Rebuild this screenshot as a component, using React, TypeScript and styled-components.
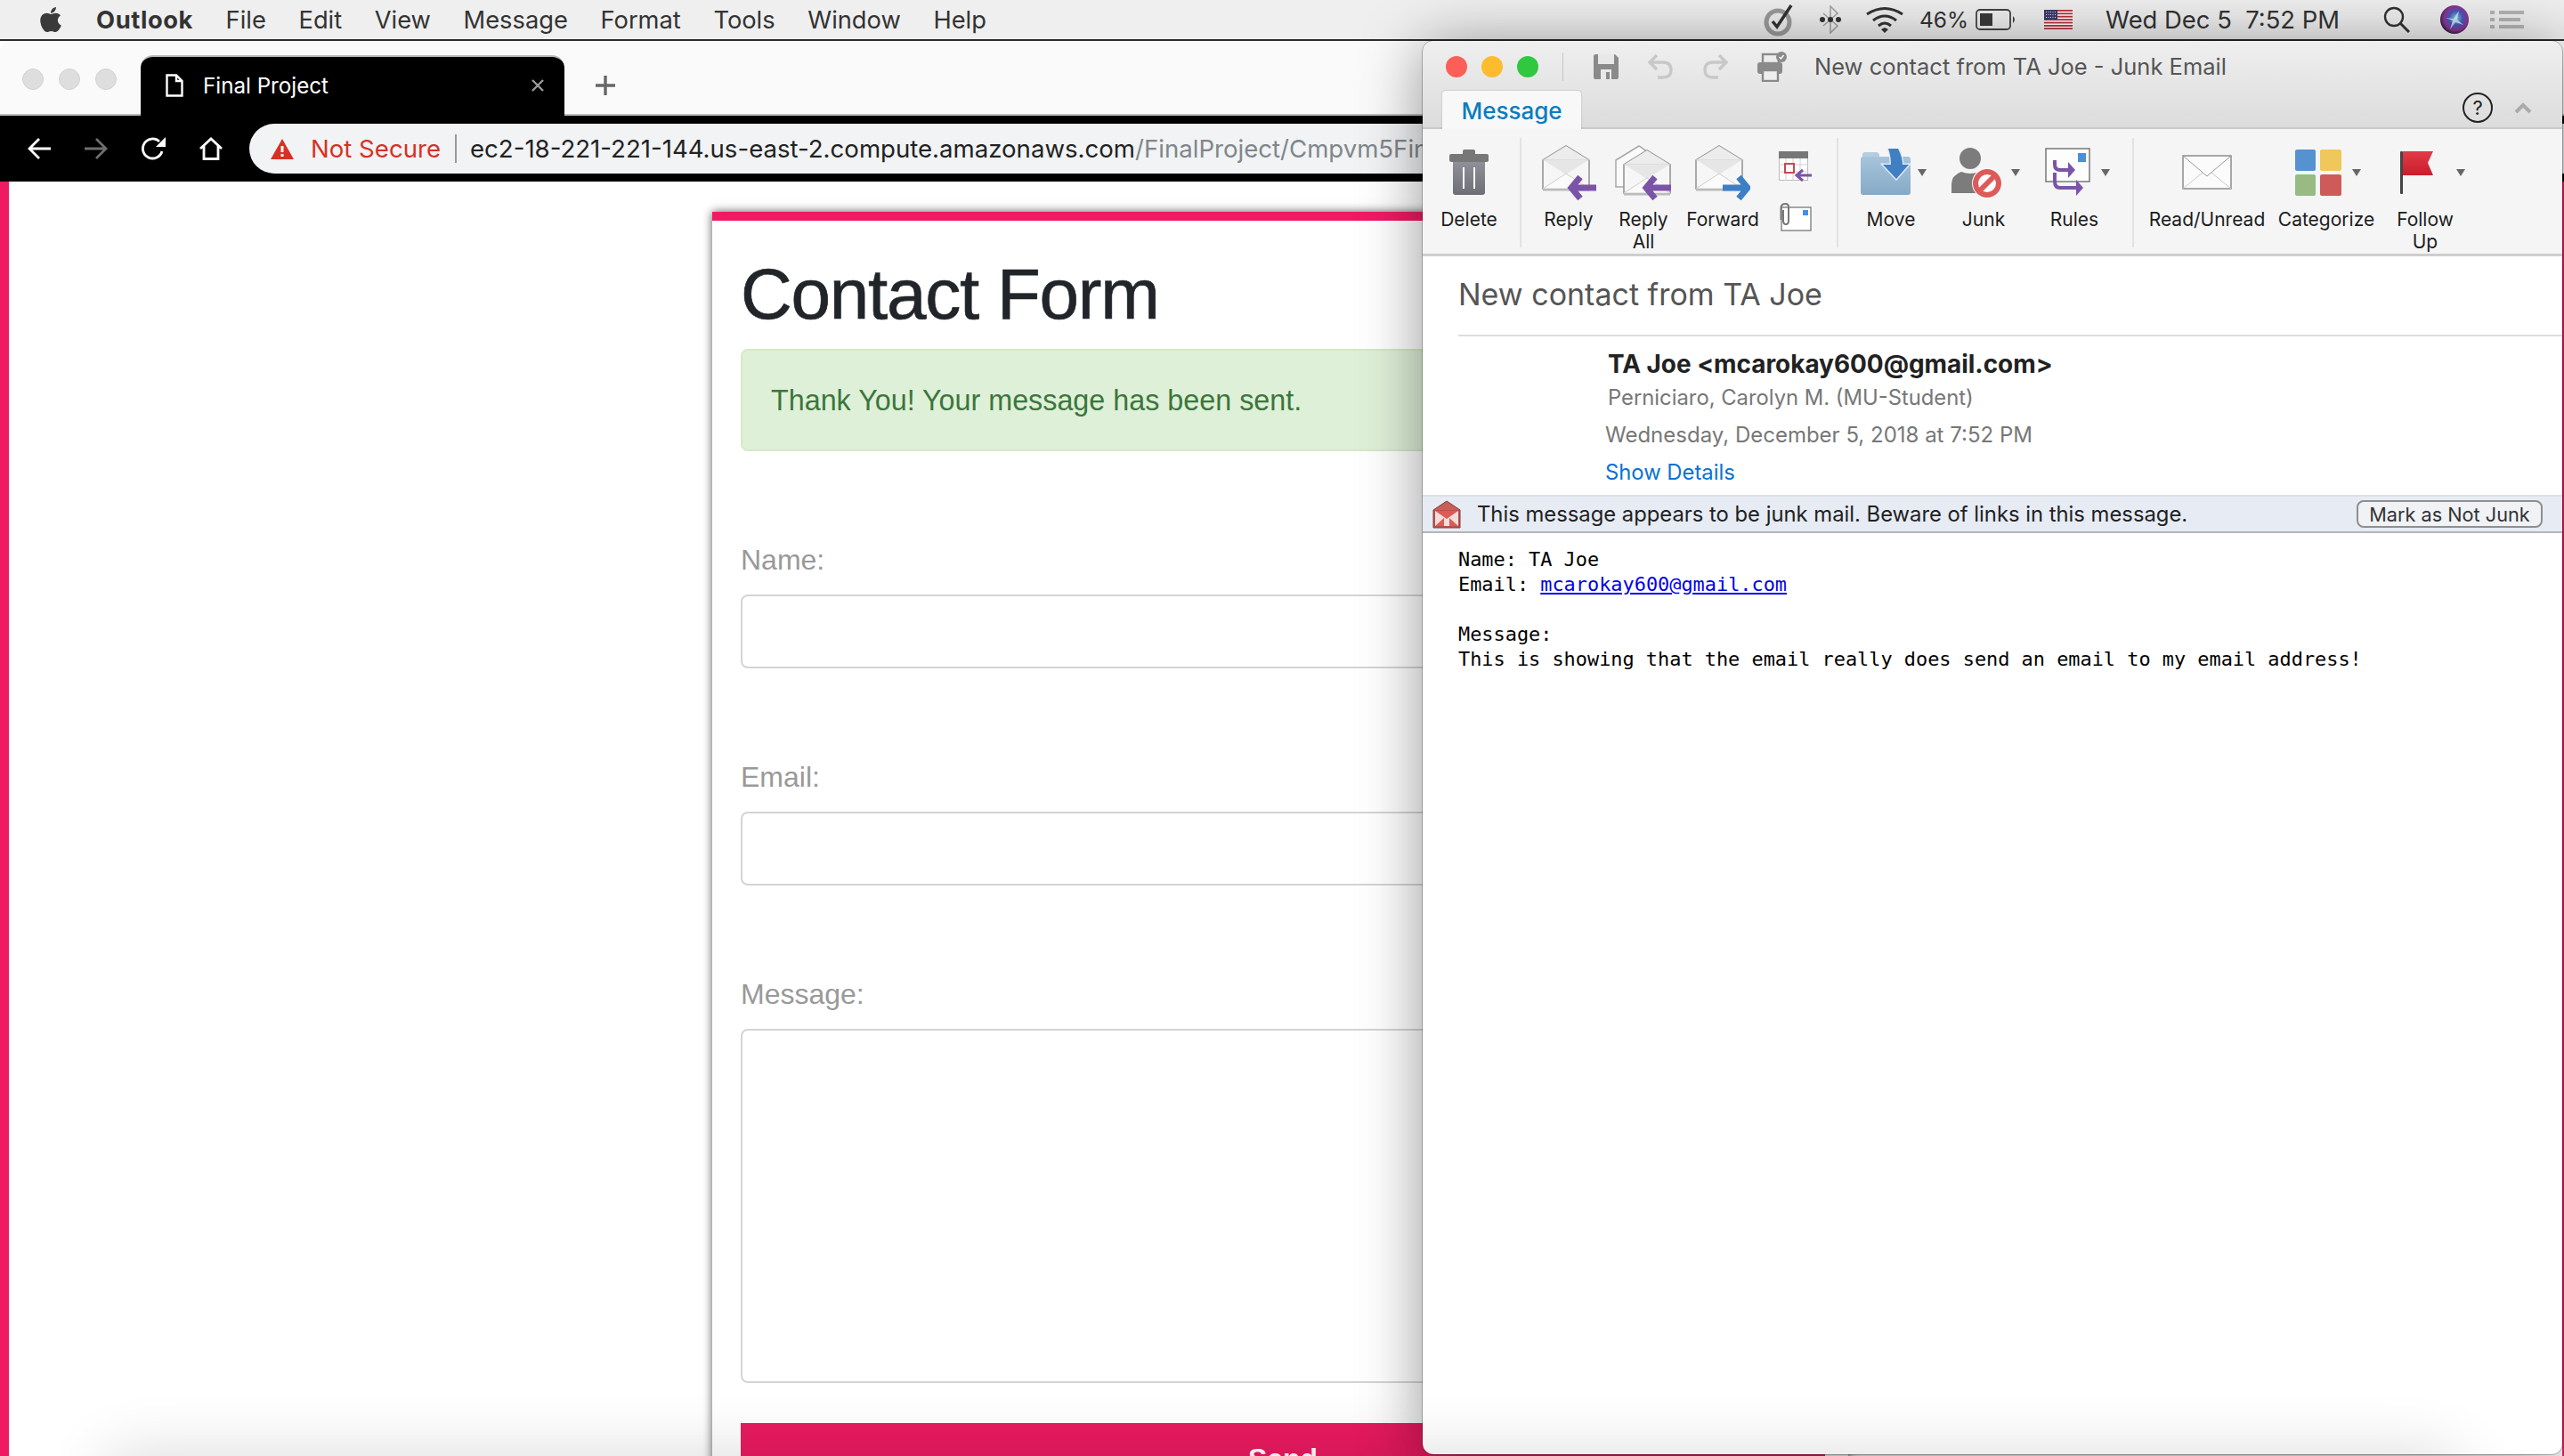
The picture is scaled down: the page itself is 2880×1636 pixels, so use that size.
import React from 'react';
import styled, { createGlobalStyle } from 'styled-components';
import { FaApple } from 'react-icons/fa';

const GlobalStyle = createGlobalStyle`
    html, body {
        margin: 0;
        padding: 0;
        background: #fff;
    }
`;

const PINK = '#f01a63';
const UI_FONT = 'Inter, "Noto Sans", sans-serif';
const PAGE_FONT = '"Liberation Sans", Arial, sans-serif';

const Screen = styled.div`
    position: relative;
    width: 2880px;
    height: 1636px;
    overflow: hidden;
    display: flex;
    flex-direction: column;
    background: #fff;
    font-family: ${UI_FONT};
`;

/* ---------- mac menu bar ---------- */

const MenuBar = styled.div`
    height: 44px;
    flex: none;
    display: flex;
    align-items: center;
    padding-left: 42px;
    background: #efefef;
    border-bottom: 2px solid #2c2c2c;
    color: #333;
    font-size: 27.3px;
`;

const AppleLogo = styled(FaApple)`
    width: 30px;
    height: 32px;
    margin-right: 36px;
    color: #3a3a3a;
`;

const MenuItems = styled.div`
    display: flex;
    gap: 36.6px;
`;

const MenuItem = styled.span<{ $bold?: boolean }>`
    font-weight: ${(p) => (p.$bold ? 700 : 400)};
    letter-spacing: ${(p) => (p.$bold ? '0.6px' : '0')};
`;

const StatusArea = styled.div`
    margin-left: auto;
    padding-right: 45px;
    display: flex;
    align-items: center;
`;

const StatusSlot = styled.span<{ $gap: number }>`
    display: flex;
    align-items: center;
    margin-left: ${(p) => p.$gap}px;
`;

const BatteryPercent = styled(StatusSlot)`
    font-size: 24.5px;
`;

const ClockSlot = styled(StatusSlot)`
    font-size: 27.4px;
`;

/* ---------- browser ---------- */

const BrowserWindow = styled.div`
    flex: 1;
    min-height: 0;
    display: flex;
    flex-direction: column;
`;

const TabStrip = styled.div`
    height: 84px;
    flex: none;
    box-sizing: border-box;
    display: flex;
    align-items: flex-end;
    padding-left: 25px;
    background: #fafafa;
    border-top-left-radius: 10px;
    border-bottom: 2px solid #bdbdbd;
`;

const GrayLights = styled.div`
    display: flex;
    gap: 17px;
    align-self: center;
    margin-top: 4px;
    margin-right: 27px;
`;

const GrayLight = styled.span`
    width: 24px;
    height: 24px;
    border-radius: 50%;
    background: #dedede;
    border: 1px solid #d2d2d2;
    box-sizing: border-box;
`;

const ActiveTab = styled.div`
    width: 476px;
    height: 68px;
    box-sizing: border-box;
    margin-bottom: -2px;
    display: flex;
    align-items: center;
    padding: 0 22px 2px 28px;
    background: #000;
    border-top: 2px solid #b8b8b8;
    border-radius: 14px 14px 0 0;
    color: #fff;
    font-size: 24.2px;
`;

const TabTitle = styled.span`
    margin-left: 22px;
    flex: 1;
`;

const NewTabButton = styled.span`
    align-self: center;
    margin-left: 34px;
    margin-top: 18px;
    display: flex;
`;

const Toolbar = styled.div`
    height: 74px;
    flex: none;
    display: flex;
    align-items: center;
    padding-left: 31px;
    background: #000;
`;

const NavIcons = styled.div`
    display: flex;
    gap: 38px;
    margin-right: 30px;
`;

const AddressPill = styled.div`
    flex: 1;
    height: 56px;
    display: flex;
    align-items: center;
    padding-left: 24px;
    background: #f1f3f4;
    border-radius: 28px 0 0 28px;
    font-size: 27.6px;
    white-space: nowrap;
    overflow: hidden;
`;

const NotSecure = styled.span`
    margin-left: 19px;
    color: #d93025;
`;

const PillDivider = styled.span`
    width: 2px;
    height: 32px;
    margin: 0 15px 0 16px;
    background: #9a9a9a;
`;

const UrlHost = styled.span`
    color: #222;
`;

const UrlPath = styled.span`
    color: #80868b;
`;

const Page = styled.div`
    flex: 1;
    min-height: 0;
    overflow: hidden;
    padding-top: 34px;
    background: #fff;
    border-left: 10px solid ${PINK};
    border-right: 2px solid ${PINK};
    font-family: ${PAGE_FONT};
`;

const FormCard = styled.div`
    width: 1276px;
    margin-left: 790px;
    box-sizing: border-box;
    padding: 0 26px 60px 32px;
    background: #fff;
    border-top: 10px solid #f01a63;
    box-shadow: 0 0 10px rgba(0, 0, 0, 0.65);
`;

const FormTitle = styled.h1`
    margin: 35px 0 13px;
    font-size: 80px;
    font-weight: 400;
    line-height: 96px;
    letter-spacing: -1.25px;
    color: #212529;
    -webkit-text-stroke: 0.7px #212529;
`;

const SuccessAlert = styled.div`
    height: 115px;
    box-sizing: border-box;
    display: flex;
    align-items: center;
    padding: 2px 31px 0 32px;
    margin-bottom: 98px;
    background: #dff0d8;
    border: 2px solid #d6e9c6;
    border-radius: 8px;
    color: #3c763d;
    font-size: 32.3px;
`;

const FieldLabel = styled.label`
    display: block;
    margin-bottom: 15px;
    font-size: 32px;
    line-height: 48px;
    color: #999;
`;

const Field = styled.div<{ $height: number }>`
    height: ${(p) => p.$height}px;
    box-sizing: border-box;
    margin-bottom: 98px;
    background: #fff;
    border: 2px solid #d4d4d4;
    border-radius: 8px;
`;

const TextareaField = styled(Field)`
    margin-bottom: 45px;
`;

const SendButton = styled.div`
    height: 96px;
    box-sizing: border-box;
    padding-top: 16px;
    background: #e91a60;
    color: #fff;
    font-size: 32px;
    line-height: 48px;
    font-weight: 700;
    text-align: center;
`;

/* ---------- outlook ---------- */

const OutlookWindow = styled.div`
    position: absolute;
    left: 1598px;
    top: 46px;
    width: 1280px;
    height: 1588px;
    box-sizing: border-box;
    display: flex;
    flex-direction: column;
    overflow: hidden;
    background: #fff;
    border-radius: 12px;
    outline: 1px solid rgba(0, 0, 0, 0.25);
    font-family: ${UI_FONT};
`;

const WindowShadow = styled.div`
    position: absolute;
    left: 1598px;
    top: 46px;
    width: 1280px;
    height: 1588px;
    border-radius: 12px;
    box-shadow: 0 6px 70px rgba(0, 0, 0, 0.42);
`;

const TitleChrome = styled.div`
    flex: none;
    height: 99px;
    box-sizing: border-box;
    display: flex;
    flex-direction: column;
    background: linear-gradient(#efefef, #dcdcdc);
    border-bottom: 2px solid #c8c8c8;
`;

const TitleRow = styled.div`
    height: 56px;
    flex: none;
    box-sizing: border-box;
    display: flex;
    align-items: center;
    padding: 1px 0 0 26px;
    color: #555;
    font-size: 25.5px;
`;

const TrafficLights = styled.div`
    display: flex;
    gap: 16px;
`;

const TrafficLight = styled.span<{ $color: string }>`
    width: 24px;
    height: 24px;
    border-radius: 50%;
    background: ${(p) => p.$color};
`;

const TitleDivider = styled.span`
    width: 1px;
    height: 32px;
    margin: 0 34px 0 27px;
    background: #c6c6c6;
`;

const QuickIcons = styled.div`
    display: flex;
    align-items: center;
    gap: 32px;
    margin-right: 30px;
`;

const TabRow = styled.div`
    flex: 1;
    display: flex;
    align-items: flex-start;
    padding-left: 22px;
`;

const MessageTab = styled.div`
    width: 156px;
    height: 44px;
    box-sizing: border-box;
    display: flex;
    align-items: center;
    justify-content: center;
    background: #f8f8f8;
    border-radius: 4px 4px 0 0;
    box-shadow: 0 0 2px rgba(0, 0, 0, 0.25);
    color: #0a7cc1;
    font-size: 26px;
    font-weight: 500;
`;

const TabRowTools = styled.div`
    margin-left: auto;
    margin-right: 34px;
    margin-top: 2px;
    display: flex;
    align-items: center;
    gap: 24px;
`;

const Ribbon = styled.div`
    flex: none;
    height: 143px;
    box-sizing: border-box;
    display: flex;
    padding-left: 14px;
    background: #f5f5f5;
    border-bottom: 3px solid #cecece;
`;

const RibbonSep = styled.span<{ $ml: number; $mr: number }>`
    width: 2px;
    height: 123px;
    margin: 10px ${(p) => p.$mr}px 0 ${(p) => p.$ml}px;
    background: #e2e2e2;
`;

const RibbonItem = styled.div<{ $w: number }>`
    width: ${(p) => p.$w}px;
    flex: none;
    display: flex;
    flex-direction: column;
    align-items: center;
    padding-top: 15px;
`;

const IconSlot = styled.div<{ $shift?: number }>`
    height: 68px;
    display: flex;
    align-items: center;
    gap: 8px;
    margin-left: ${(p) => p.$shift ?? 0}px;
`;

const RibbonLabel = styled.div`
    margin-top: 6px;
    text-align: center;
    font-size: 21px;
    line-height: 25px;
    color: #1c1c1c;
`;

const SmallStack = styled.div`
    width: 70px;
    flex: none;
    display: flex;
    flex-direction: column;
    align-items: center;
    gap: 22px;
    padding-top: 25px;
`;

const Caret = styled.span<{ $offset?: number }>`
    width: 0;
    height: 0;
    margin-left: ${(p) => p.$offset ?? 0}px;
    border-left: 5px solid transparent;
    border-right: 5px solid transparent;
    border-top: 8px solid #666;
`;

const Subject = styled.div`
    margin: 21px 0 23px 40px;
    font-size: 34px;
    line-height: 44px;
    color: #555;
`;

const HeaderRule = styled.div`
    height: 2px;
    margin-left: 40px;
    background: #dcdcdc;
`;

const Sender = styled.div`
    margin: 13px 0 0 208px;
    font-size: 27.9px;
    line-height: 36px;
    font-weight: 700;
    color: #222;
`;

const Recipient = styled.div`
    margin: 4px 0 0 208px;
    font-size: 23.8px;
    line-height: 32px;
    color: #777;
`;

const SentDate = styled.div`
    margin: 10px 0 0 205px;
    font-size: 24px;
    line-height: 32px;
    color: #777;
`;

const ShowDetails = styled.div`
    margin: 10px 0 9px 205px;
    font-size: 23.8px;
    line-height: 32px;
    color: #0a72d4;
`;

const JunkBar = styled.div`
    height: 43px;
    flex: none;
    box-sizing: border-box;
    display: flex;
    align-items: center;
    padding: 0 22px 0 11px;
    background: #e6ebf4;
    border-top: 2px solid #dcdfe6;
    border-bottom: 2px solid #b5b5b5;
    color: #222;
    font-size: 23.8px;
`;

const JunkText = styled.span`
    margin-left: 18px;
`;

const NotJunkButton = styled.span`
    margin-left: auto;
    width: 209px;
    height: 31px;
    box-sizing: border-box;
    display: flex;
    align-items: center;
    justify-content: center;
    background: #f0f2f6;
    border: 2px solid #8f8f8f;
    border-radius: 8px;
    font-size: 21.7px;
    color: #333;
`;

const MessageBody = styled.pre`
    margin: 16px 0 0 40px;
    font-family: "DejaVu Sans Mono", "Liberation Mono", monospace;
    font-size: 21.9px;
    line-height: 28px;
    color: #000;
`;

const MailLink = styled.span`
    color: #0000ee;
    text-decoration: underline;
`;

const DockShadow = styled.div`
    position: absolute;
    left: 120px;
    right: 120px;
    bottom: -60px;
    height: 60px;
    box-shadow: 0 0 70px rgba(0, 0, 0, 0.16);
    pointer-events: none;
`;

/* ---------- drawn icons ---------- */

const ArrowHead = ({ dir, color }: { dir: 'left' | 'right'; color: string }) =>
    dir === 'left' ? (
        <path d="M43 36 L33 48 L43 60 M34 48 H61" fill="none" stroke={color} strokeWidth="7" />
    ) : (
        <path d="M49 36 L59 48 L49 60 M31 48 H58" fill="none" stroke={color} strokeWidth="7" />
    );

const OpenEnvelope = ({ x = 0, y = 0 }: { x?: number; y?: number }) => (
    <g transform={`translate(${x} ${y})`}>
        <path d="M1 17 L27 1 L53 17 V49 H1 Z" fill="#f6f6f6" stroke="#8f8f8f" strokeWidth="1.5" />
        <path d="M1 17 L27 1 L53 17 Z" fill="#ececec" />
        <path d="M1 17 H53" stroke="#cfcfcf" strokeWidth="1" />
        <path d="M2 17 L27 33 L52 17 Z" fill="#e6e6e6" />
        <path d="M1 49 L27 32 L53 49 Z" fill="#fbfbfb" stroke="#cdcdcd" strokeWidth="1" />
        <path d="M1 50.5 H53" stroke="#bbb" strokeWidth="2" />
    </g>
);

const TrashIcon = () => (
    <svg width="44" height="52" viewBox="0 0 44 52">
        <defs>
            <linearGradient id="trashFill" x1="0" y1="0" x2="0" y2="1">
                <stop offset="0" stopColor="#8f8f99" />
                <stop offset="1" stopColor="#6e6e76" />
            </linearGradient>
        </defs>
        <rect x="15" y="0" width="14" height="7" rx="2" fill="#777" />
        <rect x="0" y="5" width="44" height="9" rx="2" fill="#777" />
        <path d="M4 14 H40 V48 Q40 51 37 51 H7 Q4 51 4 48 Z" fill="url(#trashFill)" />
        <path d="M16 20 V44 M28 20 V44" stroke="#fff" strokeWidth="2" />
    </svg>
);

const ReplyIcon = () => (
    <svg width="62" height="62" viewBox="0 0 62 62">
        <OpenEnvelope />
        <ArrowHead dir="left" color="#7b54a8" />
    </svg>
);

const ReplyAllIcon = () => (
    <svg width="64" height="62" viewBox="0 0 64 62">
        <path d="M1 17 L27 1 L40 10 V47 H1 Z" fill="#fafafa" stroke="#a8a8a8" strokeWidth="1.5" />
        <OpenEnvelope x={9} y={5} />
        <g transform="translate(2 0)">
            <ArrowHead dir="left" color="#7b54a8" />
        </g>
    </svg>
);

const ForwardIcon = () => (
    <svg width="62" height="62" viewBox="0 0 62 62">
        <OpenEnvelope />
        <ArrowHead dir="right" color="#3d7fc4" />
    </svg>
);

const MeetingReplyIcon = () => (
    <svg width="38" height="36" viewBox="0 0 38 36">
        <rect x="0.5" y="0.5" width="32" height="32" fill="#fff" stroke="#bbb" />
        <rect x="0" y="0" width="33" height="8" fill="#777" />
        <path d="M0 15 H33 M0 23 H33 M8 8 V33 M16 8 V33 M24 8 V33" stroke="#d0d0d0" strokeWidth="1" />
        <rect x="7" y="14" width="10" height="10" fill="#fff" stroke="#c9474f" strokeWidth="2" />
        <path d="M27 21 L20 27 L27 33 M21 27 H37" fill="none" stroke="#7b54a8" strokeWidth="3" />
    </svg>
);

const AttachmentIcon = () => (
    <svg width="36" height="32" viewBox="0 0 36 32">
        <rect x="2" y="5" width="33" height="26" fill="#fff" stroke="#777" strokeWidth="1.3" />
        <rect x="26" y="8" width="6" height="6" fill="#4a90d9" />
        <path
            d="M4 8 V20 Q4 24 7 24 Q10 24 10 20 V5 Q10 1 6.5 1 Q2 1 1.5 5 V19"
            fill="none"
            stroke="#777"
            strokeWidth="2"
        />
    </svg>
);

const MoveIcon = () => (
    <svg width="56" height="54" viewBox="0 0 56 54">
        <defs>
            <linearGradient id="folderFill" x1="0" y1="0" x2="0" y2="1">
                <stop offset="0" stopColor="#a7c4db" />
                <stop offset="1" stopColor="#85aac7" />
            </linearGradient>
        </defs>
        <path d="M2 7 Q2 4 5 4 H18 Q20 4 21 7 V9 H2 Z" fill="#b5cddf" />
        <path d="M0 12 Q0 9 3 9 H53 Q56 9 56 12 V49 Q56 52 53 52 H3 Q0 52 0 49 Z" fill="url(#folderFill)" />
        <path
            d="M31 0 H42 Q47 10 47 18 H54 L40 34 L25 18 H34 Q34 8 31 0 Z"
            fill="#3f7fc2"
            stroke="#dfe8ef"
            strokeWidth="3"
            paintOrder="stroke"
        />
    </svg>
);

const JunkIcon = () => (
    <svg width="60" height="58" viewBox="0 0 60 58">
        <circle cx="22" cy="13" r="12" fill="#7c7c7c" />
        <path d="M1 52 V42 Q1 32 12 28 Q22 32 32 28 Q46 32 48 52 Z" fill="#7c7c7c" />
        <circle cx="41" cy="41" r="17" fill="#fff" />
        <circle cx="41" cy="41" r="13" fill="none" stroke="#dd5a5a" strokeWidth="6" />
        <path d="M32 50 L50 32" stroke="#dd5a5a" strokeWidth="6" />
    </svg>
);

const RulesIcon = () => (
    <svg width="52" height="56" viewBox="0 0 52 56">
        <rect x="1" y="1" width="49" height="37" fill="#fdfdfd" stroke="#777" strokeWidth="1.5" />
        <rect x="37" y="6" width="9" height="10" fill="#4a90d9" />
        <path d="M11 14 V19 Q11 25 17 25 H27" fill="none" stroke="#7b54a8" strokeWidth="4" />
        <path d="M26 16 L34 25 L26 34 Z" fill="#7b54a8" />
        <path d="M11 28 V38 Q11 45 17 45 H36" fill="none" stroke="#7b54a8" strokeWidth="4" />
        <path d="M35 36 L43 45 L35 54 Z" fill="#7b54a8" />
    </svg>
);

const ClosedEnvelopeIcon = () => (
    <svg width="56" height="40" viewBox="0 0 56 40">
        <rect x="1" y="1" width="54" height="37" fill="#fbfbfb" stroke="#8c8c8c" strokeWidth="1.5" />
        <path d="M1 1 L28 24 L55 1" fill="none" stroke="#999" strokeWidth="1" />
        <path d="M1 38 L23 20 M55 38 L33 20" fill="none" stroke="#c8c8c8" strokeWidth="1" />
    </svg>
);

const CategorizeIcon = () => (
    <svg width="52" height="52" viewBox="0 0 52 52">
        <rect x="0" y="0" width="23" height="24" rx="2" fill="#5592cf" />
        <rect x="28" y="0" width="24" height="24" rx="2" fill="#f0c75a" />
        <rect x="0" y="28" width="23" height="24" rx="2" fill="#97bb83" />
        <rect x="28" y="28" width="24" height="24" rx="2" fill="#cf5a5a" />
    </svg>
);

const FlagIcon = () => (
    <svg width="38" height="48" viewBox="0 0 38 48">
        <defs>
            <linearGradient id="flagFill" x1="0" y1="0" x2="0" y2="1">
                <stop offset="0" stopColor="#e33a48" />
                <stop offset="1" stopColor="#c81e2a" />
            </linearGradient>
        </defs>
        <rect x="0" y="0" width="3" height="48" rx="1" fill="#444" />
        <path d="M3 0 H37 L31 13 L37 27 H3 Z" fill="url(#flagFill)" />
    </svg>
);

const TaskCheckIcon = () => (
    <svg width="34" height="38" viewBox="0 0 34 38">
        <circle cx="16" cy="22" r="13" fill="none" stroke="#9b9b9b" strokeWidth="5" />
        <path d="M10 21 L15 27 L31 3" fill="none" stroke="#333" strokeWidth="3.5" />
    </svg>
);

const BluetoothIcon = () => (
    <svg width="24" height="32" viewBox="0 0 24 32">
        <path d="M4 9 L20 23 L12 31 V1 L20 9 L4 23" fill="none" stroke="#a4a4a4" strokeWidth="1.6" />
        <circle cx="3" cy="16" r="3" fill="#333" />
        <circle cx="12" cy="16" r="3" fill="#333" />
        <circle cx="21" cy="16" r="3" fill="#333" />
    </svg>
);

const WifiIcon = () => (
    <svg width="44" height="30" viewBox="0 0 44 30">
        <path d="M2 9 Q22 -4 42 9" fill="none" stroke="#333" strokeWidth="3" />
        <path d="M9 16 Q22 6 35 16" fill="none" stroke="#333" strokeWidth="3" />
        <path d="M15 22 Q22 16 29 22" fill="none" stroke="#333" strokeWidth="3" />
        <path d="M18 26 L22 24 L26 26 L22 30 Z" fill="#333" />
    </svg>
);

const BatteryIcon = () => (
    <svg width="46" height="24" viewBox="0 0 46 24">
        <rect x="1" y="1" width="38" height="22" rx="4" fill="none" stroke="#444" strokeWidth="1.8" />
        <rect x="5" y="5" width="14" height="14" fill="#3a3a3a" />
        <path d="M42 8 Q46 12 42 16 Z" fill="#444" />
    </svg>
);

const UsFlagIcon = () => (
    <svg width="32" height="22" viewBox="0 0 32 22">
        <rect width="32" height="22" fill="#fff" />
        {[0, 3.4, 6.8, 10.2, 13.6, 17, 20.2].map((y) => (
            <rect key={y} x="0" y={y} width="32" height="1.8" fill="#b6313e" />
        ))}
        <rect width="15" height="11" fill="#3c3b6e" />
        <path d="M2 2.5 H13 M2 5.5 H13 M2 8.5 H13" stroke="#d8d8e6" strokeWidth="1" strokeDasharray="1 1.5" />
    </svg>
);

const SearchIcon = () => (
    <svg width="30" height="30" viewBox="0 0 30 30">
        <circle cx="12" cy="12" r="10" fill="none" stroke="#333" strokeWidth="2.4" />
        <path d="M19 19 L29 29" stroke="#333" strokeWidth="3" />
    </svg>
);

const SiriIcon = () => (
    <svg width="32" height="32" viewBox="0 0 32 32">
        <defs>
            <radialGradient id="siriFill" cx="0.55" cy="0.45" r="0.6">
                <stop offset="0" stopColor="#7fd0e8" />
                <stop offset="0.4" stopColor="#4a58b8" />
                <stop offset="0.72" stopColor="#8c3390" />
                <stop offset="1" stopColor="#101a28" />
            </radialGradient>
        </defs>
        <circle cx="16" cy="16" r="16" fill="url(#siriFill)" />
        <path d="M6 14 L15 15 L21 6 L19 16 L26 22 L17 19 L11 27 L14 17 Z" fill="#dff4fa" opacity="0.75" />
    </svg>
);

const NotificationListIcon = () => (
    <svg width="38" height="22" viewBox="0 0 38 22">
        <path d="M0 3 H5 M10 3 H38 M0 11 H5 M10 11 H34 M0 19 H5 M10 19 H38" stroke="#b4b4b4" strokeWidth="4" />
    </svg>
);

const DocIcon = () => (
    <svg width="20" height="26" viewBox="0 0 20 26">
        <path d="M1.5 1.5 H12 L18.5 8 V24.5 H1.5 Z M12 1.5 V8 H18.5" fill="none" stroke="#fff" strokeWidth="2.4" />
    </svg>
);

const CloseIcon = () => (
    <svg width="16" height="16" viewBox="0 0 16 16">
        <path d="M2 2 L14 14 M14 2 L2 14" stroke="#9a9a9a" strokeWidth="2.4" />
    </svg>
);

const PlusIcon = () => (
    <svg width="24" height="24" viewBox="0 0 24 24">
        <path d="M12 1 V23 M1 12 H23" stroke="#666" strokeWidth="3.4" />
    </svg>
);

const NavArrow = ({ dir, color }: { dir: 'left' | 'right'; color: string }) => (
    <svg width="26" height="26" viewBox="0 0 26 26">
        <path
            d={dir === 'left' ? 'M13 2 L2 13 L13 24 M2 13 H26' : 'M13 2 L24 13 L13 24 M0 13 H24'}
            fill="none"
            stroke={color}
            strokeWidth="2.8"
        />
    </svg>
);

const ReloadIcon = () => (
    <svg width="27" height="26" viewBox="0 0 27 26">
        <path d="M23 16 A11 11 0 1 1 20 5" fill="none" stroke="#fff" strokeWidth="2.8" />
        <path d="M27 0 V11 H16 Z" fill="#fff" />
    </svg>
);

const HomeIcon = () => (
    <svg width="26" height="26" viewBox="0 0 26 26">
        <path d="M1 13 L13 2 L25 13 M5 10 V24.5 H21 V10" fill="none" stroke="#fff" strokeWidth="2.8" />
    </svg>
);

const WarningIcon = () => (
    <svg width="26" height="23" viewBox="0 0 26 23">
        <path d="M13 0 L26 23 H0 Z" fill="#d93025" />
        <rect x="11.5" y="8" width="3" height="7" fill="#fff" />
        <rect x="11.5" y="17" width="3" height="3" fill="#fff" />
    </svg>
);

const SaveIcon = () => (
    <svg width="28" height="28" viewBox="0 0 28 28">
        <path d="M0 2 Q0 0 2 0 H24 L28 4 V26 Q28 28 26 28 H2 Q0 28 0 26 Z" fill="#8a8a8a" />
        <rect x="5" y="0" width="18" height="11" fill="#e8e8e8" />
        <rect x="8" y="17" width="12" height="11" fill="#e8e8e8" />
        <rect x="14" y="20" width="4" height="8" fill="#8a8a8a" />
    </svg>
);

const UndoIcon = ({ flip }: { flip?: boolean }) => (
    <svg width="30" height="28" viewBox="0 0 30 28">
        <g transform={flip ? 'translate(30 0) scale(-1 1)' : undefined}>
            <path d="M11 1 L3 9 L11 17" fill="none" stroke="#c8c8c8" strokeWidth="3.4" />
            <path d="M4 9 H18 Q27 9 27 18 Q27 26 18 26 H12" fill="none" stroke="#c8c8c8" strokeWidth="3.4" />
        </g>
    </svg>
);

const PrintIcon = () => (
    <svg width="34" height="34" viewBox="0 0 34 34">
        <rect x="6" y="3" width="18" height="10" fill="none" stroke="#8a8a8a" strokeWidth="2.4" />
        <rect x="0" y="12" width="28" height="13" rx="3" fill="#8a8a8a" />
        <rect x="6" y="21" width="17" height="12" fill="#eee" stroke="#8a8a8a" strokeWidth="2.4" />
        <circle cx="27" cy="6" r="6" fill="#8a8a8a" />
        <path d="M24.5 6 L26.5 8 L29.5 4" fill="none" stroke="#fff" strokeWidth="1.4" />
    </svg>
);

const HelpIcon = styled.span`
    width: 30px;
    height: 30px;
    display: flex;
    align-items: center;
    justify-content: center;
    border: 2px solid #222;
    border-radius: 50%;
    font-size: 22px;
    color: #222;
`;

const CollapseIcon = () => (
    <svg width="20" height="13" viewBox="0 0 20 13">
        <path d="M2 11 L10 3 L18 11" fill="none" stroke="#aaa" strokeWidth="4" />
    </svg>
);

const JunkEnvelopeIcon = () => (
    <svg width="32" height="32" viewBox="0 0 32 32">
        <path d="M16 1 L31 11 V31 H1 V11 Z" fill="#b65050" stroke="#8a3d3d" strokeWidth="1" />
        <path d="M2 11 L16 2 L30 11 Z" fill="#c86058" />
        <rect x="3" y="12" width="26" height="17" fill="#f3dcda" />
        <path d="M3 12 H29 L16 21 Z M3 29 L13 20 V29 Z M29 29 L19 20 V29 Z" fill="#dd5a55" />
    </svg>
);

/* ---------- data ---------- */

const menuNames = ['File', 'Edit', 'View', 'Message', 'Format', 'Tools', 'Window', 'Help'];

const App = (): React.ReactElement => (
    <Screen>
        <GlobalStyle />
        <MenuBar>
            <AppleLogo />
            <MenuItems>
                <MenuItem $bold>Outlook</MenuItem>
                {menuNames.map((name) => (
                    <MenuItem key={name}>{name}</MenuItem>
                ))}
            </MenuItems>
            <StatusArea>
                <StatusSlot $gap={0}>
                    <TaskCheckIcon />
                </StatusSlot>
                <StatusSlot $gap={29}>
                    <BluetoothIcon />
                </StatusSlot>
                <StatusSlot $gap={27}>
                    <WifiIcon />
                </StatusSlot>
                <BatteryPercent $gap={17}>46%</BatteryPercent>
                <StatusSlot $gap={8}>
                    <BatteryIcon />
                </StatusSlot>
                <StatusSlot $gap={31}>
                    <UsFlagIcon />
                </StatusSlot>
                <ClockSlot $gap={37}>Wed Dec 5&nbsp;&nbsp;7:52 PM</ClockSlot>
                <StatusSlot $gap={49}>
                    <SearchIcon />
                </StatusSlot>
                <StatusSlot $gap={34}>
                    <SiriIcon />
                </StatusSlot>
                <StatusSlot $gap={24}>
                    <NotificationListIcon />
                </StatusSlot>
            </StatusArea>
        </MenuBar>

        <BrowserWindow>
            <TabStrip>
                <GrayLights>
                    <GrayLight />
                    <GrayLight />
                    <GrayLight />
                </GrayLights>
                <ActiveTab>
                    <DocIcon />
                    <TabTitle>Final Project</TabTitle>
                    <CloseIcon />
                </ActiveTab>
                <NewTabButton>
                    <PlusIcon />
                </NewTabButton>
            </TabStrip>
            <Toolbar>
                <NavIcons>
                    <NavArrow dir="left" color="#fff" />
                    <NavArrow dir="right" color="#6e6e6e" />
                    <ReloadIcon />
                    <HomeIcon />
                </NavIcons>
                <AddressPill>
                    <WarningIcon />
                    <NotSecure>Not Secure</NotSecure>
                    <PillDivider />
                    <UrlHost>ec2-18-221-221-144.us-east-2.compute.amazonaws.com</UrlHost>
                    <UrlPath>/FinalProject/Cmpvm5Final/contact.php</UrlPath>
                </AddressPill>
            </Toolbar>
            <Page>
                <FormCard>
                    <FormTitle>Contact Form</FormTitle>
                    <SuccessAlert>Thank You! Your message has been sent.</SuccessAlert>
                    <FieldLabel>Name:</FieldLabel>
                    <Field $height={83} />
                    <FieldLabel>Email:</FieldLabel>
                    <Field $height={83} />
                    <FieldLabel>Message:</FieldLabel>
                    <TextareaField $height={398} />
                    <SendButton>Send</SendButton>
                </FormCard>
            </Page>
        </BrowserWindow>

        <WindowShadow />
        <OutlookWindow>
            <TitleChrome>
                <TitleRow>
                    <TrafficLights>
                        <TrafficLight $color="#fc5f57" />
                        <TrafficLight $color="#fdbc2e" />
                        <TrafficLight $color="#2fc83f" />
                    </TrafficLights>
                    <TitleDivider />
                    <QuickIcons>
                        <SaveIcon />
                        <UndoIcon />
                        <UndoIcon flip />
                        <PrintIcon />
                    </QuickIcons>
                    New contact from TA Joe - Junk Email
                </TitleRow>
                <TabRow>
                    <MessageTab>Message</MessageTab>
                    <TabRowTools>
                        <HelpIcon>?</HelpIcon>
                        <CollapseIcon />
                    </TabRowTools>
                </TabRow>
            </TitleChrome>

            <Ribbon>
                <RibbonItem $w={76}>
                    <IconSlot>
                        <TrashIcon />
                    </IconSlot>
                    <RibbonLabel>Delete</RibbonLabel>
                </RibbonItem>
                <RibbonSep $ml={19} $mr={11} />
                <RibbonItem $w={84}>
                    <IconSlot $shift={2}>
                        <ReplyIcon />
                    </IconSlot>
                    <RibbonLabel>Reply</RibbonLabel>
                </RibbonItem>
                <RibbonItem $w={84}>
                    <IconSlot>
                        <ReplyAllIcon />
                    </IconSlot>
                    <RibbonLabel>
                        Reply
                        <br />
                        All
                    </RibbonLabel>
                </RibbonItem>
                <RibbonItem $w={94}>
                    <IconSlot>
                        <ForwardIcon />
                    </IconSlot>
                    <RibbonLabel>Forward</RibbonLabel>
                </RibbonItem>
                <SmallStack>
                    <MeetingReplyIcon />
                    <AttachmentIcon />
                </SmallStack>
                <RibbonSep $ml={11} $mr={11} />
                <RibbonItem $w={96}>
                    <IconSlot $shift={6}>
                        <MoveIcon />
                        <Caret />
                    </IconSlot>
                    <RibbonLabel>Move</RibbonLabel>
                </RibbonItem>
                <RibbonItem $w={112}>
                    <IconSlot $shift={4}>
                        <JunkIcon />
                        <Caret />
                    </IconSlot>
                    <RibbonLabel>Junk</RibbonLabel>
                </RibbonItem>
                <RibbonItem $w={92}>
                    <IconSlot $shift={7}>
                        <RulesIcon />
                        <Caret $offset={3} />
                    </IconSlot>
                    <RibbonLabel>Rules</RibbonLabel>
                </RibbonItem>
                <RibbonSep $ml={19} $mr={11} />
                <RibbonItem $w={142}>
                    <IconSlot>
                        <ClosedEnvelopeIcon />
                    </IconSlot>
                    <RibbonLabel>Read/Unread</RibbonLabel>
                </RibbonItem>
                <RibbonItem $w={126}>
                    <IconSlot $shift={4}>
                        <CategorizeIcon />
                        <Caret $offset={4} />
                    </IconSlot>
                    <RibbonLabel>Categorize</RibbonLabel>
                </RibbonItem>
                <RibbonItem $w={96}>
                    <IconSlot $shift={16}>
                        <FlagIcon />
                        <Caret $offset={17} />
                    </IconSlot>
                    <RibbonLabel>
                        Follow
                        <br />
                        Up
                    </RibbonLabel>
                </RibbonItem>
            </Ribbon>

            <Subject>New contact from TA Joe</Subject>
            <HeaderRule />
            <Sender>TA Joe &lt;mcarokay600@gmail.com&gt;</Sender>
            <Recipient>Perniciaro, Carolyn M. (MU-Student)</Recipient>
            <SentDate>Wednesday, December 5, 2018 at 7:52 PM</SentDate>
            <ShowDetails>Show Details</ShowDetails>
            <JunkBar>
                <JunkEnvelopeIcon />
                <JunkText>This message appears to be junk mail. Beware of links in this message.</JunkText>
                <NotJunkButton>Mark as Not Junk</NotJunkButton>
            </JunkBar>
            <MessageBody>
                Name: TA Joe
                {'\n'}Email: <MailLink>mcarokay600@gmail.com</MailLink>
                {'\n\n'}Message:
                {'\n'}This is showing that the email really does send an email to my email address!
            </MessageBody>
        </OutlookWindow>
        <DockShadow />
    </Screen>
);

export default App;
